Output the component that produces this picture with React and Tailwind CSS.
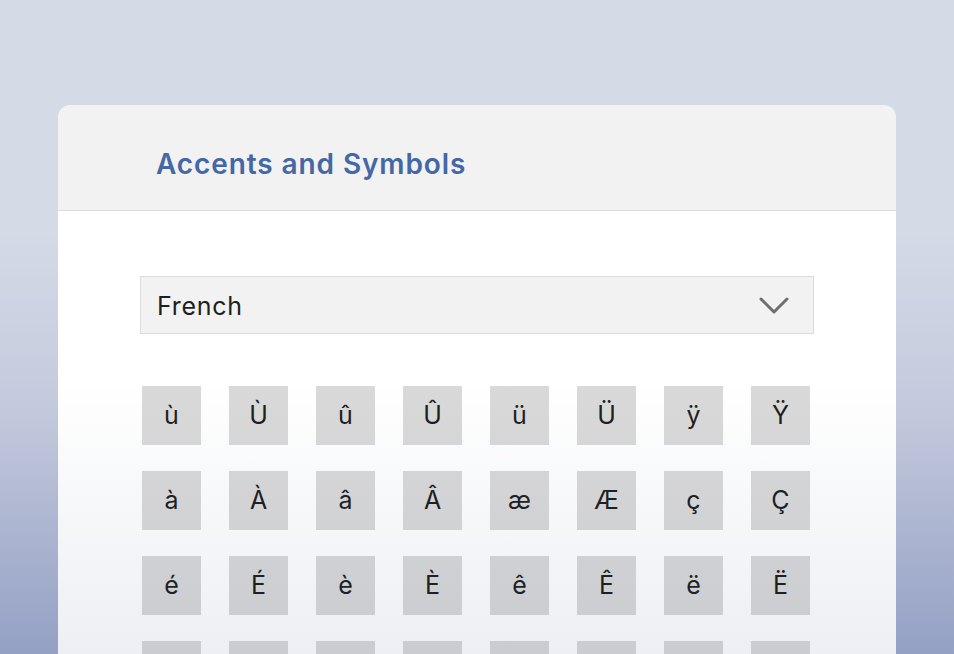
import { useState } from "react";

const rows = [
	["ù", "Ù", "û", "Û", "ü", "Ü", "ÿ", "Ÿ"],
	["à", "À", "â", "Â", "æ", "Æ", "ç", "Ç"],
	["é", "É", "è", "È", "ê", "Ê", "ë", "Ë"],
	["î", "Î", "ï", "Ï", "ô", "Ô", "œ", "Œ"],
];

const Chevron = () => (
	<svg width="30" height="18" viewBox="0 0 30 18" fill="none">
		<polyline
			points="2,3 15,16 28,3"
			stroke="#6f6f6f"
			strokeWidth="3"
			strokeLinecap="round"
			strokeLinejoin="round"
		/>
	</svg>
);

const App = () => {
	const [language] = useState("French");

	return (
		<div
			className="h-[654px] overflow-hidden px-[58px] pt-[105px] bg-[linear-gradient(to_bottom,#d5dae7_35%,#c4cadd_62%,#94a0c4_100%)]"
			style={{ fontFamily: "Inter, 'Noto Sans', sans-serif" }}
		>
			<div className="rounded-t-xl overflow-hidden">
				<div className="h-[106px] flex items-center pl-[98px] pt-[12px] bg-[#f2f2f2] border-b border-[#dcdcdc]">
					<h1 className="text-[28px] font-semibold text-[#4468a6] tracking-[0.9px]">
						Accents and Symbols
					</h1>
				</div>
				<div className="relative bg-white px-[82px] pt-[65px] pb-10">
					<div className="h-[58px] flex items-center justify-between pl-[16px] pr-[24px] bg-[#f2f2f2] border border-[#dcdcdc]">
						<span className="pt-[3px] text-[25px] tracking-[0.7px] text-[#1f1f1f]">
							{language}
						</span>
						<Chevron />
					</div>
					<div className="ml-[2px] mt-[52px] grid grid-cols-[repeat(8,59px)] gap-x-[28px] gap-y-[26px]">
						{rows.flat().map((ch) => (
							<button
								key={ch}
								className="h-[59px] w-[59px] flex items-center justify-center bg-[#d9d9d9] text-[25px] text-[#1f1f1f]"
							>
								{ch}
							</button>
						))}
					</div>
					<div className="pointer-events-none absolute inset-0 bg-fixed bg-[linear-gradient(to_bottom,rgba(20,40,100,0)_58%,rgba(20,40,100,0.075)_100%)]" />
				</div>
			</div>
		</div>
	);
};

export default App;
